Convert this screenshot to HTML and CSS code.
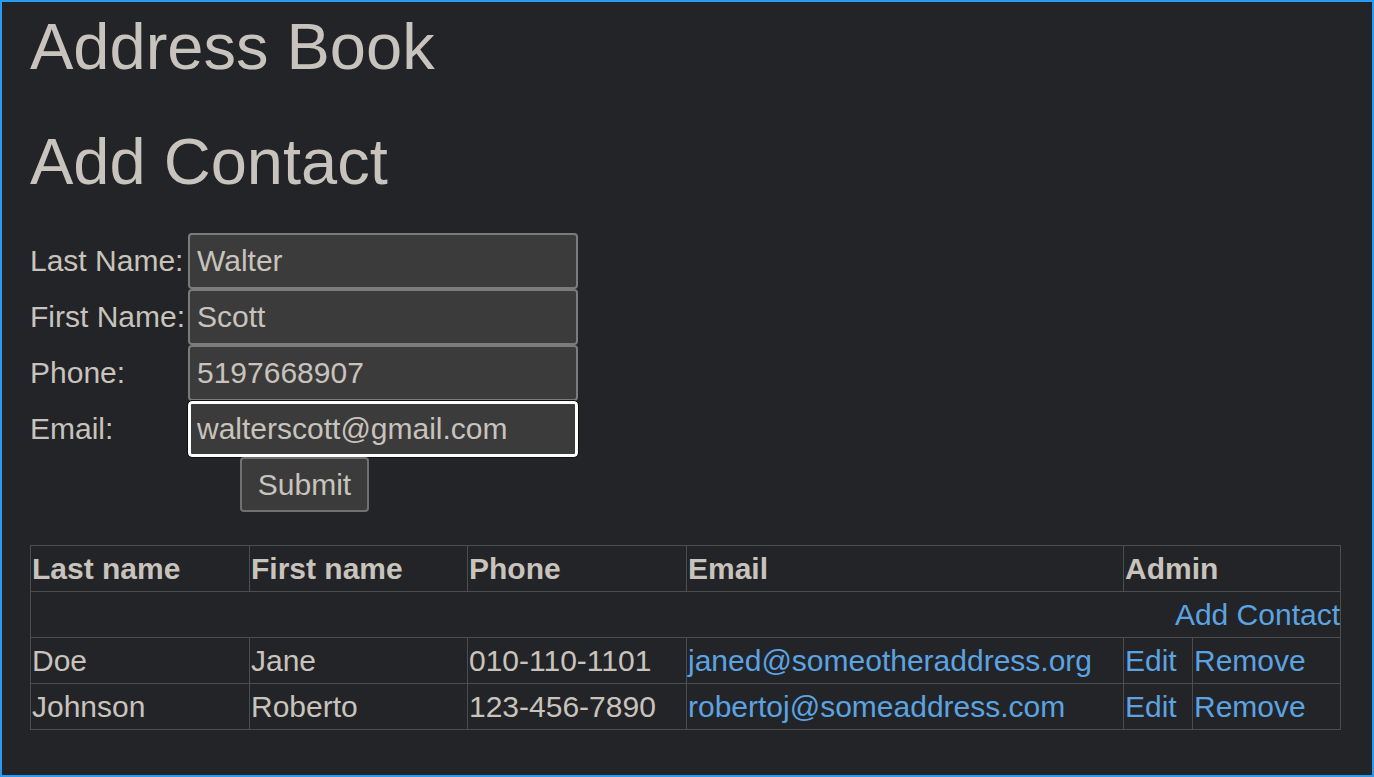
FILE: index.html
```html
<!DOCTYPE html>
<html lang="en">
<head>
  <meta charset="UTF-8">
  <title>Address Book</title>
  <link rel="stylesheet" href="styles.css">
</head>
<body>
  <h1 class="title">Address Book</h1>
  <h2 class="title">Add Contact</h2>

  <!-- contact form -->
  <form class="contact-form">
    <label for="last">Last Name:</label>
    <input type="text" id="last" value="Walter">
    <label for="first">First Name:</label>
    <input type="text" id="first" value="Scott">
    <label for="phone">Phone:</label>
    <input type="text" id="phone" value="5197668907">
    <label for="email">Email:</label>
    <input type="text" id="email" class="focused" value="walterscott@gmail.com">
    <button type="button" class="submit">Submit</button>
  </form>

  <!-- contacts list -->
  <table class="contacts">
    <colgroup>
      <col class="c-last">
      <col class="c-first">
      <col class="c-phone">
      <col class="c-email">
      <col class="c-edit">
      <col class="c-remove">
    </colgroup>
    <tr>
      <th>Last name</th>
      <th>First name</th>
      <th>Phone</th>
      <th>Email</th>
      <th colspan="2">Admin</th>
    </tr>
    <tr>
      <td colspan="6" class="add"><a href="#">Add Contact</a></td>
    </tr>
    <tr>
      <td>Doe</td>
      <td>Jane</td>
      <td>010-110-1101</td>
      <td><a href="#">janed@someotheraddress.org</a></td>
      <td><a href="#">Edit</a></td>
      <td><a href="#">Remove</a></td>
    </tr>
    <tr>
      <td>Johnson</td>
      <td>Roberto</td>
      <td>123-456-7890</td>
      <td><a href="#">robertoj@someaddress.com</a></td>
      <td><a href="#">Edit</a></td>
      <td><a href="#">Remove</a></td>
    </tr>
  </table>
</body>
</html>
```

FILE: styles.css
```css
html {
  background: #232427;
}
body {
  margin: 0;
  height: 777px;
  box-sizing: border-box;
  border: 2px solid #2b9af3;
  padding: 7px 32px 0 28px;
  background: #232427;
  color: #c8c3bc;
  font-family: "Liberation Sans", Arial, sans-serif;
  font-size: 30px;
}
a {
  color: #5ca3e2;
  text-decoration: none;
}

.title {
  font-size: 65px;
  font-weight: normal;
  line-height: 75px;
  margin: 0 0 40px;
}
h2.title {
  margin-bottom: 34px;
}

/* Form */
.contact-form {
  display: grid;
  grid-template-columns: 158px 390px;
  align-items: center;
}
.contact-form input {
  height: 56px;
  width: 390px;
  box-sizing: border-box;
  border: 2px solid #7b7b7b;
  border-radius: 4px;
  background: #3b3b3b;
  color: #c8c3bc;
  font-family: "Liberation Sans", Arial, sans-serif;
  font-size: 30px;
  padding: 0 7px;
  margin: 0;
}
.contact-form input.focused {
  border: 3px solid #fff;
  padding: 0 6px;
  outline: 1px solid #111;
  caret-color: #fff;
}
.submit {
  grid-column: 1 / 3;
  justify-self: start;
  margin-left: 210px;
  height: 55px;
  width: 129px;
  padding: 0;
  border: 2px solid #707070;
  border-radius: 4px;
  background: #3b3b3b;
  color: #c8c3bc;
  font-family: "Liberation Sans", Arial, sans-serif;
  font-size: 30px;
}

/* Table */
.contacts {
  margin-top: 33px;
  width: 1310px;
  table-layout: fixed;
  border-collapse: collapse;
  border: 1px solid #55595c;
}
.c-last { width: 219px; }
.c-first { width: 218px; }
.c-phone { width: 219px; }
.c-email { width: 437px; }
.c-edit { width: 69px; }
.c-remove { width: 148px; }
.contacts th,
.contacts td {
  border: 1px solid #4a4e51;
  height: 45px;
  padding: 0 1px;
  text-align: left;
  white-space: nowrap;
}
.contacts th {
  font-weight: bold;
}
.contacts td.add {
  text-align: right;
  padding-right: 0;
}
```
